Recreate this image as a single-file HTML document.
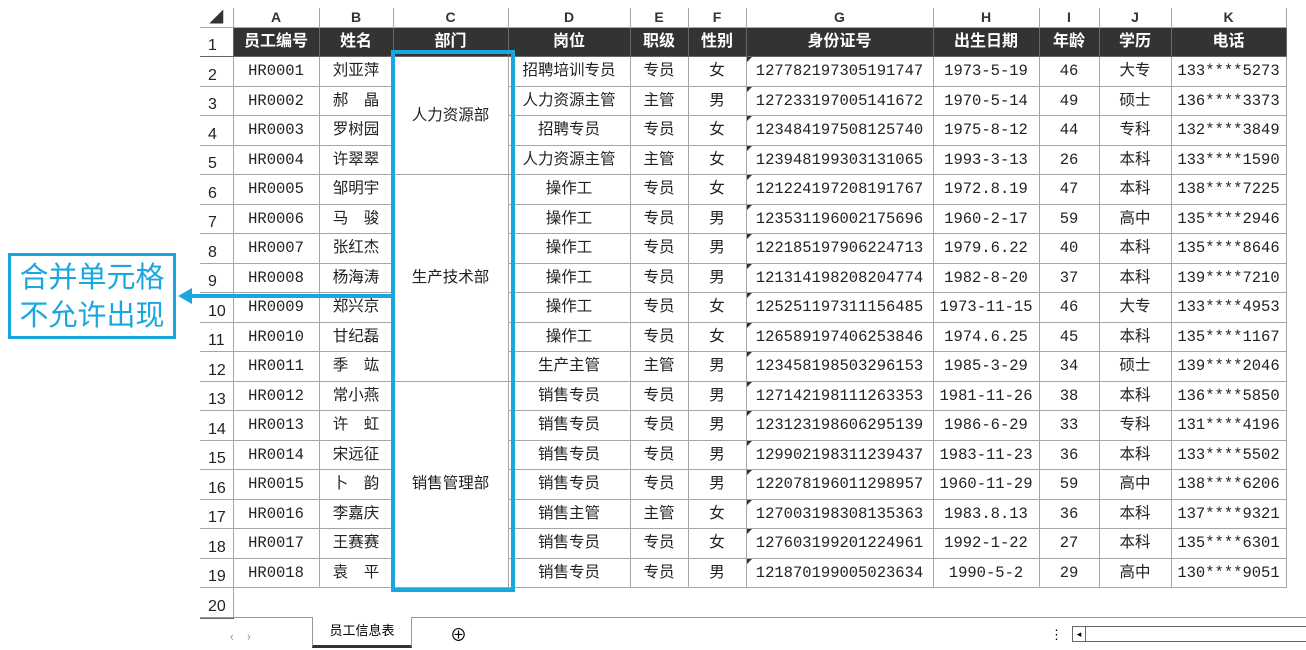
<!DOCTYPE html>
<html><head><meta charset="utf-8"><style>
body{margin:0;width:1306px;height:649px;background:#fff;position:relative;overflow:hidden;font-family:"Liberation Mono","Noto Sans CJK SC",monospace;}
table{position:absolute;left:200px;top:8px;border-collapse:collapse;table-layout:fixed;}
td{border:1px solid #a6a6a6;text-align:center;font-size:15.5px;line-height:28px;color:#222;padding:0;height:28.5px;white-space:nowrap;overflow:hidden;vertical-align:middle}
tr.l td{height:19px;line-height:19px;font-family:"Liberation Sans","Noto Sans CJK SC",sans-serif;font-weight:bold;font-size:14px;border-top:none;color:#333}
tr.h td{background:#333;color:#fff;font-family:"Liberation Sans","Noto Sans CJK SC",sans-serif;font-weight:bold;font-size:16px;height:28px;border-color:#666}
td.n{font-family:"Liberation Sans",sans-serif;font-size:16px;text-align:left;padding-left:8px;border-left:none;background:#fff!important;color:#222!important;font-weight:normal!important;vertical-align:bottom;line-height:20px}
td.g{position:relative;}
td.g:before{content:"";position:absolute;left:0;top:0;border-top:5px solid #333;border-right:5px solid transparent}
.blue{position:absolute;left:391px;top:50px;width:116px;height:534px;border:4px solid #1aa7e0}
.call{position:absolute;left:8px;top:253px;width:162px;height:80px;border:3px solid #1aa7e0;color:#1aa7e0;font-family:"Noto Sans CJK SC",sans-serif;font-size:29px;line-height:38px;text-align:center}
.arr{position:absolute;left:190px;top:294px;width:202px;height:4px;background:#1aa7e0}
.ah{position:absolute;left:178px;top:288px;border-right:14px solid #1aa7e0;border-top:8px solid transparent;border-bottom:8px solid transparent}
.bot{position:absolute;left:200px;top:617px;width:1106px;height:32px;border-top:1px solid #999;font-family:"Noto Sans CJK SC",sans-serif;font-size:13px}
</style></head><body>
<table>
<colgroup><col style="width:33px"><col style="width:86px"><col style="width:74px"><col style="width:115px"><col style="width:122px"><col style="width:58px"><col style="width:58px"><col style="width:187px"><col style="width:106px"><col style="width:60px"><col style="width:72px"><col style="width:115px"></colgroup>
<tr class="l"><td style="border-left:none">◢</td><td>A</td><td>B</td><td>C</td><td>D</td><td>E</td><td>F</td><td>G</td><td>H</td><td>I</td><td>J</td><td>K</td></tr>
<tr class="h"><td class="n">1</td><td>员工编号</td><td>姓名</td><td>部门</td><td>岗位</td><td>职级</td><td>性别</td><td>身份证号</td><td>出生日期</td><td>年龄</td><td>学历</td><td>电话</td></tr>
<tr><td class="n">2</td><td>HR0001</td><td>刘亚萍</td><td rowspan="4">人力资源部</td><td>招聘培训专员</td><td>专员</td><td>女</td><td class="g">127782197305191747</td><td>1973-5-19</td><td>46</td><td>大专</td><td>133****5273</td></tr>
<tr><td class="n">3</td><td>HR0002</td><td>郝　晶</td><td>人力资源主管</td><td>主管</td><td>男</td><td class="g">127233197005141672</td><td>1970-5-14</td><td>49</td><td>硕士</td><td>136****3373</td></tr>
<tr><td class="n">4</td><td>HR0003</td><td>罗树园</td><td>招聘专员</td><td>专员</td><td>女</td><td class="g">123484197508125740</td><td>1975-8-12</td><td>44</td><td>专科</td><td>132****3849</td></tr>
<tr><td class="n">5</td><td>HR0004</td><td>许翠翠</td><td>人力资源主管</td><td>主管</td><td>女</td><td class="g">123948199303131065</td><td>1993-3-13</td><td>26</td><td>本科</td><td>133****1590</td></tr>
<tr><td class="n">6</td><td>HR0005</td><td>邹明宇</td><td rowspan="7">生产技术部</td><td>操作工</td><td>专员</td><td>女</td><td class="g">121224197208191767</td><td>1972.8.19</td><td>47</td><td>本科</td><td>138****7225</td></tr>
<tr><td class="n">7</td><td>HR0006</td><td>马　骏</td><td>操作工</td><td>专员</td><td>男</td><td class="g">123531196002175696</td><td>1960-2-17</td><td>59</td><td>高中</td><td>135****2946</td></tr>
<tr><td class="n">8</td><td>HR0007</td><td>张红杰</td><td>操作工</td><td>专员</td><td>男</td><td class="g">122185197906224713</td><td>1979.6.22</td><td>40</td><td>本科</td><td>135****8646</td></tr>
<tr><td class="n">9</td><td>HR0008</td><td>杨海涛</td><td>操作工</td><td>专员</td><td>男</td><td class="g">121314198208204774</td><td>1982-8-20</td><td>37</td><td>本科</td><td>139****7210</td></tr>
<tr><td class="n">10</td><td>HR0009</td><td>郑兴京</td><td>操作工</td><td>专员</td><td>女</td><td class="g">125251197311156485</td><td>1973-11-15</td><td>46</td><td>大专</td><td>133****4953</td></tr>
<tr><td class="n">11</td><td>HR0010</td><td>甘纪磊</td><td>操作工</td><td>专员</td><td>女</td><td class="g">126589197406253846</td><td>1974.6.25</td><td>45</td><td>本科</td><td>135****1167</td></tr>
<tr><td class="n">12</td><td>HR0011</td><td>季　竑</td><td>生产主管</td><td>主管</td><td>男</td><td class="g">123458198503296153</td><td>1985-3-29</td><td>34</td><td>硕士</td><td>139****2046</td></tr>
<tr><td class="n">13</td><td>HR0012</td><td>常小燕</td><td rowspan="7">销售管理部</td><td>销售专员</td><td>专员</td><td>男</td><td class="g">127142198111263353</td><td>1981-11-26</td><td>38</td><td>本科</td><td>136****5850</td></tr>
<tr><td class="n">14</td><td>HR0013</td><td>许　虹</td><td>销售专员</td><td>专员</td><td>男</td><td class="g">123123198606295139</td><td>1986-6-29</td><td>33</td><td>专科</td><td>131****4196</td></tr>
<tr><td class="n">15</td><td>HR0014</td><td>宋远征</td><td>销售专员</td><td>专员</td><td>男</td><td class="g">129902198311239437</td><td>1983-11-23</td><td>36</td><td>本科</td><td>133****5502</td></tr>
<tr><td class="n">16</td><td>HR0015</td><td>卜　韵</td><td>销售专员</td><td>专员</td><td>男</td><td class="g">122078196011298957</td><td>1960-11-29</td><td>59</td><td>高中</td><td>138****6206</td></tr>
<tr><td class="n">17</td><td>HR0016</td><td>李嘉庆</td><td>销售主管</td><td>主管</td><td>女</td><td class="g">127003198308135363</td><td>1983.8.13</td><td>36</td><td>本科</td><td>137****9321</td></tr>
<tr><td class="n">18</td><td>HR0017</td><td>王赛赛</td><td>销售专员</td><td>专员</td><td>女</td><td class="g">127603199201224961</td><td>1992-1-22</td><td>27</td><td>本科</td><td>135****6301</td></tr>
<tr><td class="n">19</td><td>HR0018</td><td>袁　平</td><td>销售专员</td><td>专员</td><td>男</td><td class="g">121870199005023634</td><td>1990-5-2</td><td>29</td><td>高中</td><td>130****9051</td></tr>
<tr><td class="n" style="border-bottom:2px solid #666">20</td><td colspan="11" style="border:none"></td></tr>
</table>
<div class="blue"></div>
<div class="call">合并单元格<br>不允许出现</div>
<div class="arr"></div><div class="ah"></div>
<div class="bot">
<span style="position:absolute;left:30px;top:8px;color:#888">‹　›</span>
<div style="position:absolute;left:112px;top:-1px;width:98px;height:28px;border:1px solid #999;border-top:none;border-bottom:3px solid #333;background:#fff;text-align:center;line-height:26px">员工信息表</div>
<span style="position:absolute;left:250px;top:3px;font-size:17px">⊕</span>
<span style="position:absolute;left:850px;top:6px">⋮</span>
<div style="position:absolute;left:872px;top:8px;width:234px;height:14px;border:1px solid #666;border-right:none"><div style="width:12px;height:14px;border-right:1px solid #666;font-size:9px;line-height:14px;text-align:center">◂</div></div>
</div>
</body></html>
